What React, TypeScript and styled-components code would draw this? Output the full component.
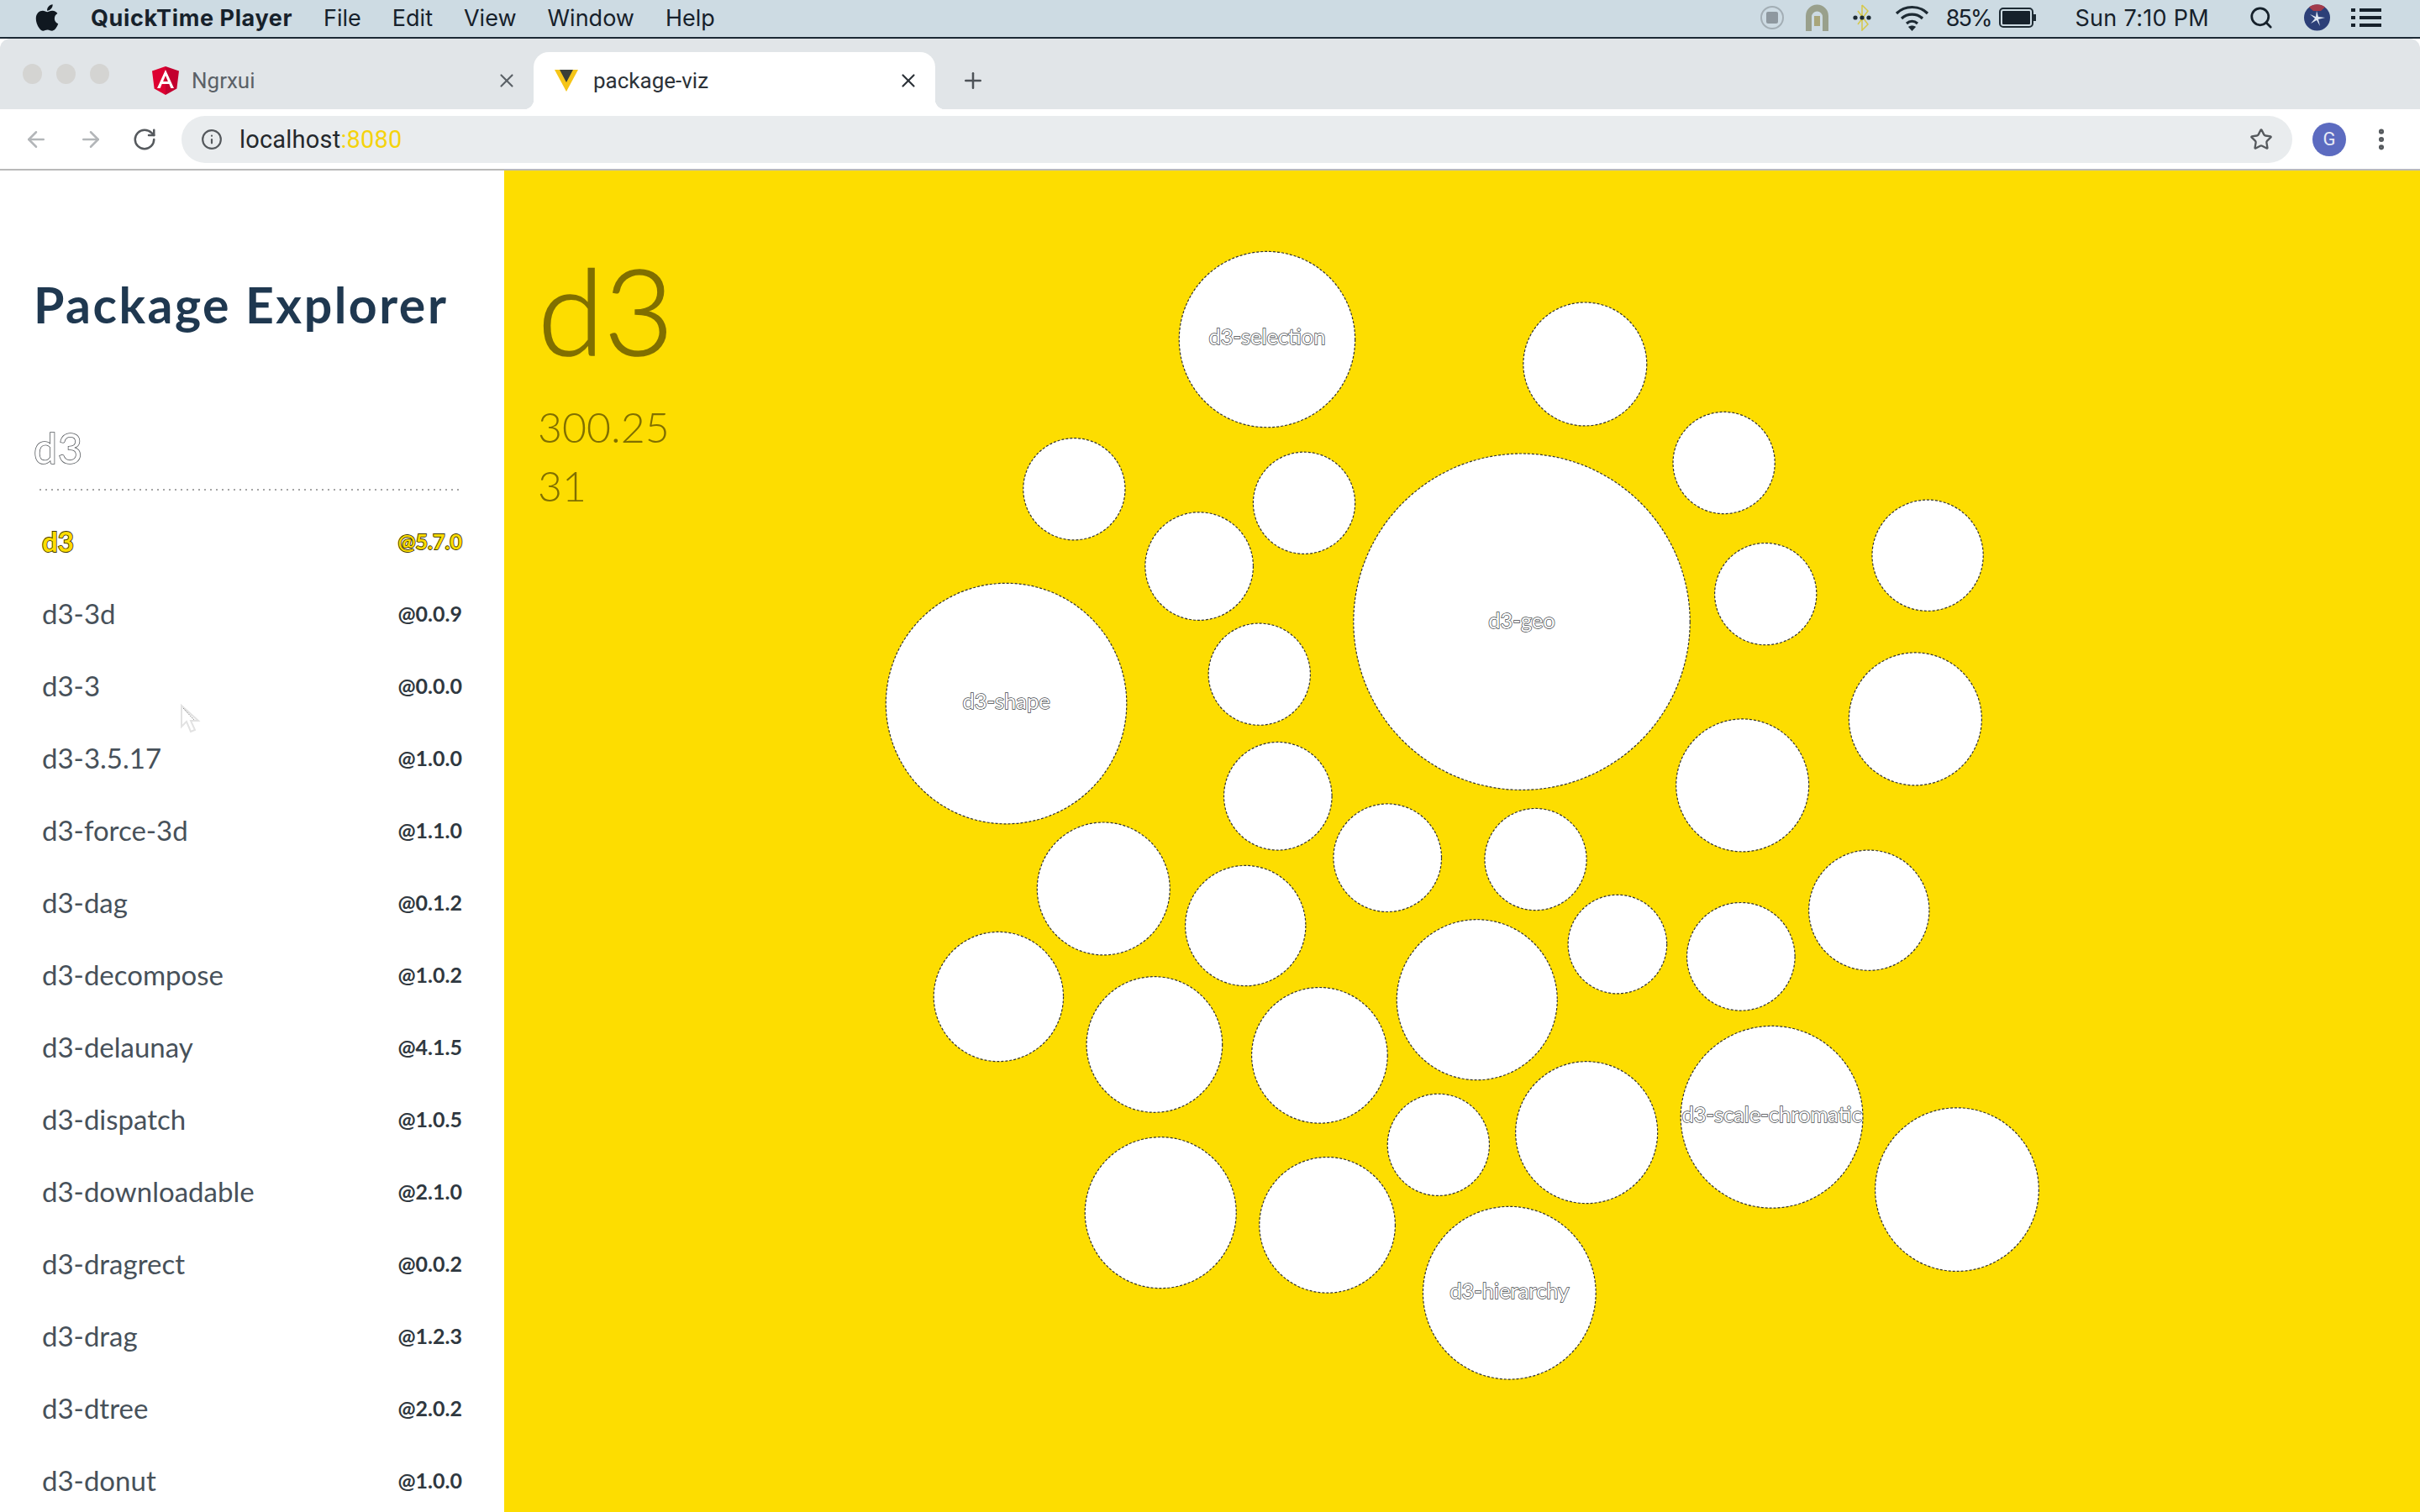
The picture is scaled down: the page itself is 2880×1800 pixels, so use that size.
import styled, { createGlobalStyle } from 'styled-components';
import { ArrowLeft, ArrowRight, RotateCw, Info, Star, X, Plus, Search, EllipsisVertical } from 'lucide-react';
import { FaApple } from 'react-icons/fa';

const YELLOW = '#fddd00';
const SCALE = 2880 / 1568;
const MAIN_X = 600;
const MAIN_Y = 203;

const packages = [
  ['d3', '@5.7.0'],
  ['d3-3d', '@0.0.9'],
  ['d3-3', '@0.0.0'],
  ['d3-3.5.17', '@1.0.0'],
  ['d3-force-3d', '@1.1.0'],
  ['d3-dag', '@0.1.2'],
  ['d3-decompose', '@1.0.2'],
  ['d3-delaunay', '@4.1.5'],
  ['d3-dispatch', '@1.0.5'],
  ['d3-downloadable', '@2.1.0'],
  ['d3-dragrect', '@0.0.2'],
  ['d3-drag', '@1.2.3'],
  ['d3-dtree', '@2.0.2'],
  ['d3-donut', '@1.0.0'],
];

// measured on the shrunk screenshot, scaled up when drawn
const bubbles: { x: number; y: number; r: number; label?: string; labelY?: number }[] = [
  { x: 821, y: 220, r: 57, label: 'd3-selection', labelY: 218 },
  { x: 1027, y: 236, r: 40 },
  { x: 1117, y: 300, r: 33 },
  { x: 696, y: 317, r: 33 },
  { x: 845, y: 326, r: 33 },
  { x: 777, y: 367, r: 35 },
  { x: 986, y: 403, r: 109, label: 'd3-geo', labelY: 402 },
  { x: 1144, y: 385, r: 33 },
  { x: 1249, y: 360, r: 36 },
  { x: 652, y: 456, r: 78, label: 'd3-shape', labelY: 454 },
  { x: 816, y: 437, r: 33 },
  { x: 1241, y: 466, r: 43 },
  { x: 1129, y: 509, r: 43 },
  { x: 828, y: 516, r: 35 },
  { x: 899, y: 556, r: 35 },
  { x: 995, y: 557, r: 33 },
  { x: 715, y: 576, r: 43 },
  { x: 807, y: 600, r: 39 },
  { x: 1211, y: 590, r: 39 },
  { x: 1048, y: 612, r: 32 },
  { x: 1128, y: 620, r: 35 },
  { x: 647, y: 646, r: 42 },
  { x: 957, y: 648, r: 52 },
  { x: 748, y: 677, r: 44 },
  { x: 855, y: 684, r: 44 },
  { x: 1148, y: 724, r: 59, label: 'd3-scale-chromatic', labelY: 722 },
  { x: 932, y: 742, r: 33 },
  { x: 1028, y: 734, r: 46 },
  { x: 1268, y: 771, r: 53 },
  { x: 752, y: 786, r: 49 },
  { x: 860, y: 794, r: 44 },
  { x: 978, y: 838, r: 56, label: 'd3-hierarchy', labelY: 836 },
];

const GlobalStyle = createGlobalStyle`
  html, body {
    margin: 0;
    padding: 0;
    background: #fff;
  }
  * {
    box-sizing: border-box;
  }
`;

const Screen = styled.div`
  display: flex;
  flex-direction: column;
  width: 2880px;
  height: 1800px;
  overflow: hidden;
  font-family: Lato, sans-serif;
`;

const MenuBar = styled.div`
  display: flex;
  align-items: center;
  flex: none;
  height: 46px;
  padding: 0 46px 2px 40px;
  background: #cddbe3;
  border-bottom: 2px solid #1c2a35;
  color: #16212b;
  font-family: Inter, sans-serif;
  font-size: 27px;
`;

const AppleMark = styled(FaApple)`
  width: 32px;
  height: 36px;
  margin-right: 36px;
  color: #101820;
`;

const MenuItem = styled.span<{ $bold?: boolean }>`
  margin-right: 37px;
  font-weight: ${(p) => (p.$bold ? 700 : 400)};
  letter-spacing: ${(p) => (p.$bold ? '0.6px' : '0')};
`;

const MenuSpacer = styled.div`
  flex: 1;
`;

const StatusSlot = styled.span<{ $gap: number; $tracking?: number }>`
  display: flex;
  align-items: center;
  margin-right: ${(p) => p.$gap}px;
  letter-spacing: ${(p) => p.$tracking ?? 0}px;
`;

const TabStrip = styled.div`
  display: flex;
  align-items: flex-end;
  flex: none;
  height: 84px;
  background: #e1e5e8;
  border-radius: 12px 12px 0 0;
`;

const TrafficLights = styled.div`
  display: flex;
  align-self: flex-start;
  gap: 17px;
  width: 160px;
  padding: 30px 0 0 27px;
`;

const Light = styled.span`
  width: 23px;
  height: 24px;
  border-radius: 50%;
  background: #d4d4d2;
`;

const Tab = styled.div<{ $active?: boolean }>`
  position: relative;
  display: flex;
  align-items: center;
  width: ${(p) => (p.$active ? 478 : 475)}px;
  height: 68px;
  padding: 0 19px 0 ${(p) => (p.$active ? 25 : 21)}px;
  background: ${(p) => (p.$active ? '#fff' : 'transparent')};
  border-radius: 18px 18px 0 0;
  color: ${(p) => (p.$active ? '#2c3238' : '#5b6167')};
  font-family: Roboto, sans-serif;
  font-size: 26px;
  ${(p) =>
    p.$active &&
    `
    &::before, &::after {
      content: '';
      position: absolute;
      bottom: 0;
      width: 12px;
      height: 12px;
    }
    &::before {
      left: -12px;
      background: radial-gradient(circle at 0 0, transparent 12px, #fff 12.5px);
    }
    &::after {
      right: -12px;
      background: radial-gradient(circle at 100% 0, transparent 12px, #fff 12.5px);
    }
  `}
`;

const TabTitle = styled.span<{ $indent: number }>`
  flex: 1;
  margin-left: ${(p) => p.$indent}px;
`;

const NewTab = styled(Plus)`
  width: 30px;
  height: 30px;
  margin: 0 0 19px 30px;
  color: #4d5257;
`;

const Toolbar = styled.div`
  display: flex;
  align-items: center;
  flex: none;
  height: 73px;
  padding: 0 19px 0 28px;
  background: #fff;
  border-bottom: 2px solid #b9b9b9;
`;

const NavButton = styled.span<{ $muted?: boolean; $gap: number }>`
  display: flex;
  margin-right: ${(p) => p.$gap}px;
  color: ${(p) => (p.$muted ? '#b3b6b9' : '#55595d')};
`;

const UrlPill = styled.div`
  display: flex;
  align-items: center;
  flex: none;
  width: 2512px;
  height: 56px;
  padding: 0 23px 0 23px;
  background: #e9ecee;
  border-radius: 28px;
  color: #24282c;
  font-family: Roboto, sans-serif;
  font-size: 29px;
`;

const UrlText = styled.span`
  flex: 1;
  margin-left: 20px;
  letter-spacing: 0.2px;
`;

const UrlPort = styled.span`
  color: #f5d30c;
`;

const ProfileBadge = styled.span`
  display: flex;
  align-items: center;
  justify-content: center;
  width: 40px;
  height: 40px;
  margin: 0 26px 0 24px;
  border-radius: 50%;
  background: #5c6bc0;
  color: #e8eaf6;
  font-family: Roboto, sans-serif;
  font-size: 22px;
`;

const MoreIcon = styled(EllipsisVertical)`
  width: 32px;
  height: 32px;
  color: #55595d;
  stroke-width: 2.6;
`;

const Content = styled.div`
  display: flex;
  flex: 1;
  min-height: 0;
`;

const SidebarWrap = styled.div`
  position: relative;
  flex: none;
`;

const Sidebar = styled.aside`
  width: 600px;
  padding: 125px 50px 0 40px;
  background: #fff;
`;

const Title = styled.h1`
  margin: 0;
  color: #1f3850;
  font-size: 59px;
  font-weight: 700;
  letter-spacing: 2.5px;
  line-height: 70px;
  white-space: nowrap;
`;

const SearchValue = styled.div`
  margin-top: 106px;
  color: #fff;
  font-size: 50px;
  font-weight: 400;
  letter-spacing: 1px;
  line-height: 58px;
  paint-order: stroke fill;
  -webkit-text-stroke: 1.6px #55595d;
`;

const Divider = styled.div`
  height: 2px;
  margin: 20px 0 17px 7px;
  background: repeating-linear-gradient(90deg, #a5a5a5 0 2px, transparent 2px 7px);
`;

const PackageRow = styled.div<{ $active?: boolean }>`
  display: flex;
  align-items: center;
  justify-content: space-between;
  height: 86px;
  margin-left: 10px;
  color: ${(p) => (p.$active ? YELLOW : '#47515a')};
  ${(p) => p.$active && 'paint-order: stroke fill; -webkit-text-stroke: 1.8px #3f3800;'}
`;

const PackageName = styled.span<{ $active?: boolean }>`
  font-size: 33px;
  font-weight: ${(p) => (p.$active ? 700 : 400)};
`;

const PackageVersion = styled.span<{ $active?: boolean }>`
  color: ${(p) => (p.$active ? 'inherit' : '#2f3840')};
  font-size: 25px;
  font-weight: 700;
`;

const Main = styled.main`
  position: relative;
  flex: 1;
  padding: 92px 0 0 40px;
  background: ${YELLOW};
  color: #806f00;
`;

const BigName = styled.div`
  margin-bottom: 32px;
  font-size: 143px;
  font-weight: 300;
  line-height: 146px;
  -webkit-text-stroke: 1.5px #806f00;
`;

const Metric = styled.div`
  font-size: 50px;
  font-weight: 300;
  line-height: 70px;
`;

const BubbleChart = styled.svg`
  position: absolute;
  inset: 0;
  width: 100%;
  height: 100%;
`;

const BubbleLabel = styled.text`
  fill: #fff;
  stroke: #44484c;
  stroke-width: 1.5px;
  paint-order: stroke fill;
  font-family: Lato, sans-serif;
  font-size: 25.5px;
  text-anchor: middle;
  dominant-baseline: central;
`;

const CursorMark = styled.svg`
  position: absolute;
  top: 635px;
  left: 214px;
`;

const AngularIcon = () => (
  <svg width="32" height="34" viewBox="0 0 32 34">
    <polygon points="16,0 0,5.5 2.6,26.5 16,34" fill="#dd0031" />
    <polygon points="16,0 32,5.5 29.4,26.5 16,34" fill="#c3002f" />
    <path d="M16 4 6 26h3.7l2-5h8.6l2 5H26L16 4Zm-2.9 14L16 11l2.9 7h-5.8Z" fill="#fff" />
  </svg>
);

const ViteIcon = () => (
  <svg width="28" height="26" viewBox="0 0 28 26">
    <polygon points="0,0 28,0 14,26" fill="#f5c518" />
    <polygon points="6,0 22,0 14,15" fill="#3a3f38" />
  </svg>
);

const RecordIcon = () => (
  <svg width="28" height="30" viewBox="0 0 28 30">
    <circle cx="14" cy="15" r="13" fill="none" stroke="#a3aeb5" strokeWidth="2" />
    <rect x="7" y="8" width="14" height="14" rx="2" fill="#8e989f" />
  </svg>
);

const ArchIcon = () => (
  <svg width="31" height="32" viewBox="0 0 31 32">
    <path d="M2 32V14a13.5 13.5 0 0 1 27 0v18h-7V15a6.5 6.5 0 0 0-13 0v17Z" fill="#99a08c" />
    <rect x="12" y="14" width="7" height="12" fill="#a9a67a" />
  </svg>
);

const DotsBluetoothIcon = () => (
  <svg width="22" height="32" viewBox="0 0 22 32">
    <path d="M11 1v30l7-7-12-16M11 1l7 7-12 16" fill="none" stroke="#d6c84a" strokeWidth="1.5" />
    <circle cx="3" cy="16" r="2.6" fill="#1d2a33" />
    <circle cx="11" cy="16" r="2.6" fill="#1d2a33" />
    <circle cx="19" cy="16" r="2.6" fill="#1d2a33" />
  </svg>
);

const WifiIcon = () => (
  <svg width="41" height="32" viewBox="0 0 41 32">
    <g fill="none" stroke="#1d2a33" strokeWidth="3.2">
      <path d="M2 11c10-10 27-10 37 0" />
      <path d="M8 17c7-6.5 18-6.5 25 0" />
      <path d="M14 23c4-3.5 9-3.5 13 0" />
    </g>
    <path d="M20.5 32l-4.5-5c2.5-2 6.5-2 9 0Z" fill="#1d2a33" />
  </svg>
);

const BatteryIcon = () => (
  <svg width="45" height="24" viewBox="0 0 45 24">
    <rect x="1" y="1" width="39" height="22" rx="4" fill="none" stroke="#1d2a33" strokeWidth="2" />
    <rect x="4" y="4" width="33" height="16" rx="1" fill="#16212b" />
    <rect x="41" y="8" width="3" height="8" fill="#1d2a33" />
  </svg>
);

const SiriIcon = () => (
  <svg width="31" height="32" viewBox="0 0 31 32">
    <circle cx="15.5" cy="16" r="15.5" fill="#2c3f78" />
    <path d="M6 3.5a15.5 15.5 0 0 1 19 0L20 8h-9Z" fill="#a23a4a" />
    <path d="M15 8l2 7 8 1-8 2 2 8-4-7-7 4 5-6-6-5 7 3Z" fill="#dfe7f2" />
  </svg>
);

const ListIcon = () => (
  <svg width="36" height="24" viewBox="0 0 36 24">
    <g fill="#16212b">
      <rect x="0" y="1" width="5" height="4" />
      <rect x="10" y="1" width="26" height="4" />
      <rect x="0" y="10" width="5" height="4" />
      <rect x="10" y="10" width="26" height="4" />
      <rect x="0" y="19" width="5" height="4" />
      <rect x="10" y="19" width="26" height="4" />
    </g>
  </svg>
);

export default function App() {
  return (
    <Screen>
      <GlobalStyle />
      <MenuBar>
        <AppleMark />
        <MenuItem $bold>QuickTime Player</MenuItem>
        <MenuItem>File</MenuItem>
        <MenuItem>Edit</MenuItem>
        <MenuItem>View</MenuItem>
        <MenuItem>Window</MenuItem>
        <MenuItem>Help</MenuItem>
        <MenuSpacer />
        <StatusSlot $gap={24}><RecordIcon /></StatusSlot>
        <StatusSlot $gap={27}><ArchIcon /></StatusSlot>
        <StatusSlot $gap={28}><DotsBluetoothIcon /></StatusSlot>
        <StatusSlot $gap={20}><WifiIcon /></StatusSlot>
        <StatusSlot $gap={10} $tracking={-2}>85%</StatusSlot>
        <StatusSlot $gap={45}><BatteryIcon /></StatusSlot>
        <StatusSlot $gap={47} $tracking={0.3}>Sun 7:10 PM</StatusSlot>
        <StatusSlot $gap={36}><Search size={30} strokeWidth={2.2} color="#16212b" /></StatusSlot>
        <StatusSlot $gap={25}><SiriIcon /></StatusSlot>
        <StatusSlot $gap={0}><ListIcon /></StatusSlot>
      </MenuBar>

      <TabStrip>
        <TrafficLights>
          <Light />
          <Light />
          <Light />
        </TrafficLights>
        <Tab>
          <AngularIcon />
          <TabTitle $indent={15}>Ngrxui</TabTitle>
          <X size={26} />
        </Tab>
        <Tab $active>
          <ViteIcon />
          <TabTitle $indent={18}>package-viz</TabTitle>
          <X size={26} />
        </Tab>
        <NewTab />
      </TabStrip>

      <Toolbar>
        <NavButton $muted $gap={35}><ArrowLeft size={30} /></NavButton>
        <NavButton $muted $gap={34}><ArrowRight size={30} /></NavButton>
        <NavButton $gap={29}><RotateCw size={30} /></NavButton>
        <UrlPill>
          <Info size={26} color="#55595d" />
          <UrlText>localhost<UrlPort>:8080</UrlPort></UrlText>
          <Star size={28} color="#55595d" />
        </UrlPill>
        <ProfileBadge>G</ProfileBadge>
        <MoreIcon />
      </Toolbar>

      <Content>
        <SidebarWrap>
          <Sidebar>
            <Title>Package Explorer</Title>
            <SearchValue>d3</SearchValue>
            <Divider />
            {packages.map(([name, version], i) => (
              <PackageRow key={name} $active={i === 0}>
                <PackageName $active={i === 0}>{name}</PackageName>
                <PackageVersion $active={i === 0}>{version}</PackageVersion>
              </PackageRow>
            ))}
          </Sidebar>
          <CursorMark width="26" height="36" viewBox="0 0 26 36">
            <path d="M2 2v25l6-6 5 12 5-2-5-11h9Z" fill="#fff" stroke="#e2e2e2" strokeWidth="2" />
            <path d="M4 5 17 19" stroke="#8a8a8a" strokeWidth="1" strokeDasharray="2 1" />
          </CursorMark>
        </SidebarWrap>
        <Main>
          <BigName>d3</BigName>
          <Metric>300.25</Metric>
          <Metric>31</Metric>
          <BubbleChart>
            {bubbles.map((b) => (
              <circle
                key={`${b.x}-${b.y}`}
                cx={b.x * SCALE - MAIN_X}
                cy={b.y * SCALE - MAIN_Y}
                r={b.r * SCALE}
                fill="#fff"
                stroke="#333"
                strokeWidth="1.2"
                strokeDasharray="3 2"
              />
            ))}
            {bubbles
              .filter((b) => b.label)
              .map((b) => (
                <BubbleLabel key={b.label} x={b.x * SCALE - MAIN_X} y={(b.labelY ?? b.y) * SCALE - MAIN_Y}>
                  {b.label}
                </BubbleLabel>
              ))}
          </BubbleChart>
        </Main>
      </Content>
    </Screen>
  );
}
